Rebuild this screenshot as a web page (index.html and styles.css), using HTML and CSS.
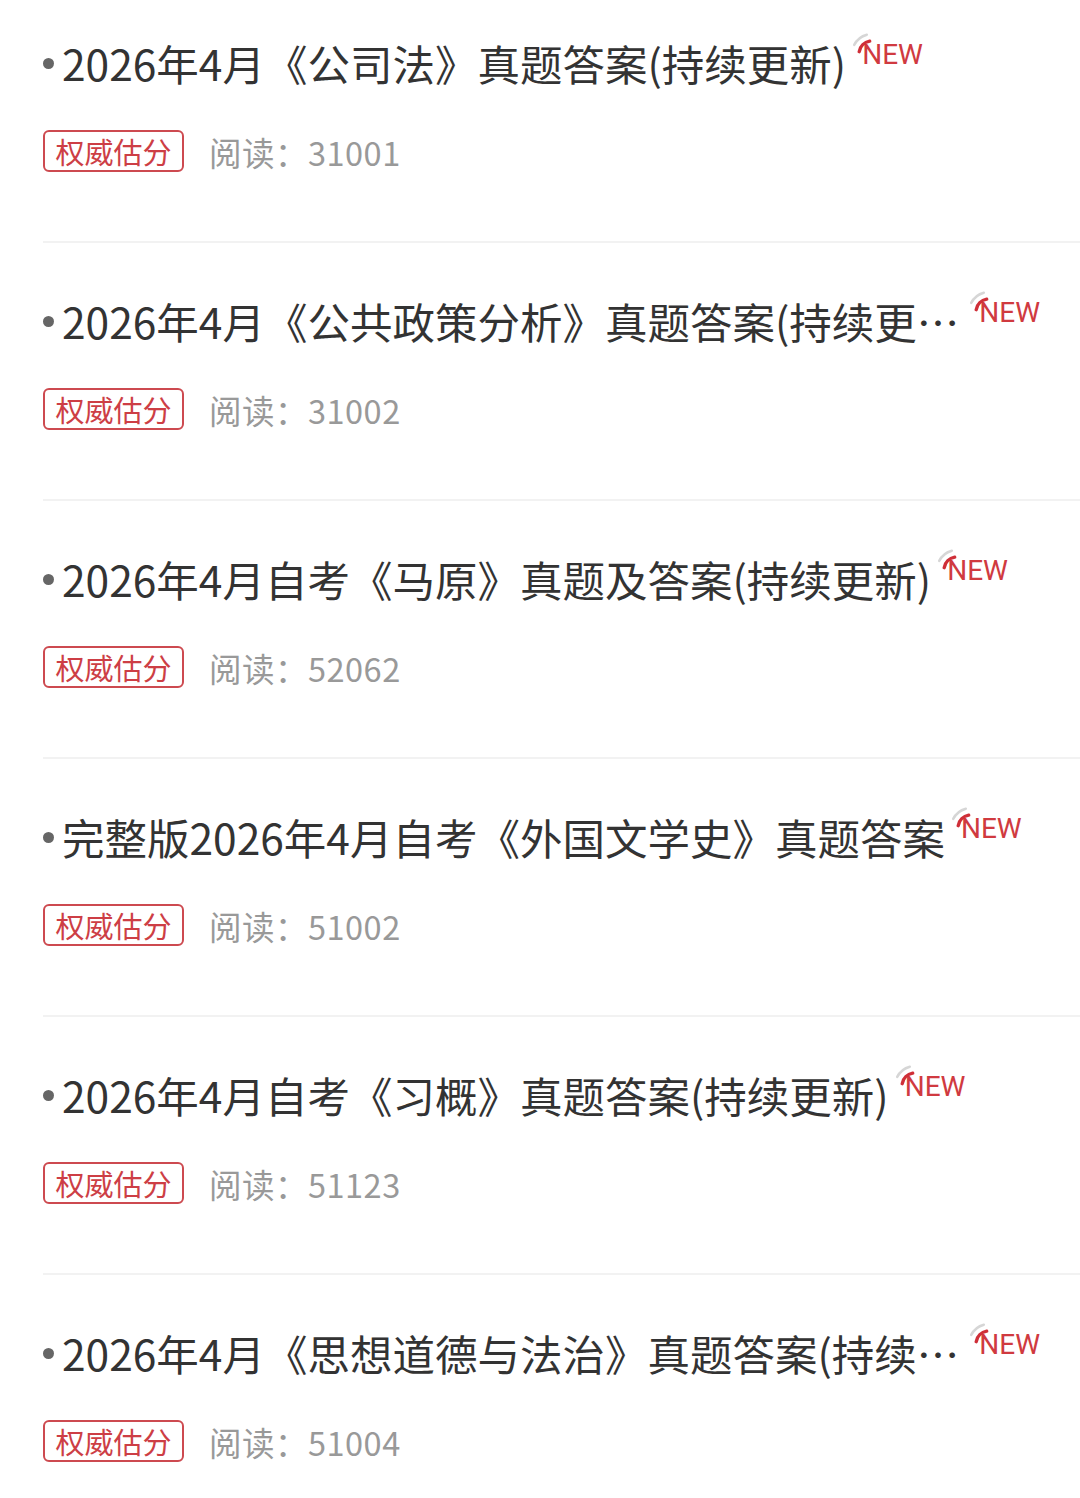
FILE: index.html
```
<!DOCTYPE html>
<html lang="zh-CN">
<head>
<meta charset="utf-8">
<title>真题答案</title>
<link rel="stylesheet" href="styles.css">
</head>
<body>
<ul class="list">
  <li class="item">
    <div class="title-row">
      <span class="dot"></span>
      <span class="title">2026年4月《公司法》真题答案(持续更新)</span>
      <span class="new"><svg class="arc" viewBox="0 0 26 26" width="26" height="26"><path d="M4.2 11.9 A20 20 0 0 1 16.8 1.7" /><path class="red" d="M9.2 18.7 A13 13 0 0 1 19.7 8.2" /></svg>NEW</span>
    </div>
    <div class="meta"><span class="tag">权威估分</span><span class="reads">阅读：31001</span></div>
  </li>
  <li class="item">
    <div class="title-row">
      <span class="dot"></span>
      <span class="title">2026年4月《公共政策分析》真题答案(持续更新)</span>
      <span class="new"><svg class="arc" viewBox="0 0 26 26" width="26" height="26"><path d="M4.2 11.9 A20 20 0 0 1 16.8 1.7" /><path class="red" d="M9.2 18.7 A13 13 0 0 1 19.7 8.2" /></svg>NEW</span>
    </div>
    <div class="meta"><span class="tag">权威估分</span><span class="reads">阅读：31002</span></div>
  </li>
  <li class="item">
    <div class="title-row">
      <span class="dot"></span>
      <span class="title">2026年4月自考《马原》真题及答案(持续更新)</span>
      <span class="new"><svg class="arc" viewBox="0 0 26 26" width="26" height="26"><path d="M4.2 11.9 A20 20 0 0 1 16.8 1.7" /><path class="red" d="M9.2 18.7 A13 13 0 0 1 19.7 8.2" /></svg>NEW</span>
    </div>
    <div class="meta"><span class="tag">权威估分</span><span class="reads">阅读：52062</span></div>
  </li>
  <li class="item">
    <div class="title-row">
      <span class="dot"></span>
      <span class="title">完整版2026年4月自考《外国文学史》真题答案</span>
      <span class="new"><svg class="arc" viewBox="0 0 26 26" width="26" height="26"><path d="M4.2 11.9 A20 20 0 0 1 16.8 1.7" /><path class="red" d="M9.2 18.7 A13 13 0 0 1 19.7 8.2" /></svg>NEW</span>
    </div>
    <div class="meta"><span class="tag">权威估分</span><span class="reads">阅读：51002</span></div>
  </li>
  <li class="item">
    <div class="title-row">
      <span class="dot"></span>
      <span class="title">2026年4月自考《习概》真题答案(持续更新)</span>
      <span class="new"><svg class="arc" viewBox="0 0 26 26" width="26" height="26"><path d="M4.2 11.9 A20 20 0 0 1 16.8 1.7" /><path class="red" d="M9.2 18.7 A13 13 0 0 1 19.7 8.2" /></svg>NEW</span>
    </div>
    <div class="meta"><span class="tag">权威估分</span><span class="reads">阅读：51123</span></div>
  </li>
  <li class="item">
    <div class="title-row">
      <span class="dot"></span>
      <span class="title">2026年4月《思想道德与法治》真题答案(持续更新)</span>
      <span class="new"><svg class="arc" viewBox="0 0 26 26" width="26" height="26"><path d="M4.2 11.9 A20 20 0 0 1 16.8 1.7" /><path class="red" d="M9.2 18.7 A13 13 0 0 1 19.7 8.2" /></svg>NEW</span>
    </div>
    <div class="meta"><span class="tag">权威估分</span><span class="reads">阅读：51004</span></div>
  </li>
</ul>
</body>
</html>
```

FILE: styles.css
```
html, body {
  margin: 0;
  padding: 0;
  background: #fff;
}
body {
  font-family: "Noto Sans CJK SC", "Noto Sans", sans-serif;
  color: #333;
}
.list {
  list-style: none;
  margin: 0;
  padding: 0;
}
.item {
  margin-left: 43px;
  padding: 48px 40px 69px 0;
  border-bottom: 2px solid #f2f2f2;
}
.item:first-child {
  padding-top: 33px;
}
.title-row {
  display: flex;
  align-items: flex-start;
  height: 60px;
}
.dot {
  flex-shrink: 0;
  width: 11px;
  height: 11px;
  border-radius: 50%;
  background: #666;
  margin-top: 25px;
  margin-right: 8px;
}
.title {
  min-width: 0;
  font-size: 42.5px;
  line-height: 60px;
  color: #333;
  white-space: nowrap;
  overflow: hidden;
  text-overflow: ellipsis;
}
.new {
  flex-shrink: 0;
  position: relative;
  margin-top: 8px;
  padding-left: 16px;
  font-family: Roboto, "Liberation Sans", sans-serif;
  font-size: 28px;
  line-height: 28px;
  color: #d03a40;
}
.arc {
  position: absolute;
  left: 4px;
  top: -8px;
  fill: none;
  stroke: #d6d6d6;
  stroke-width: 2.5;
  stroke-linecap: round;
}
.arc .red {
  stroke: #cf2f38;
  stroke-width: 3.4;
}
.meta {
  display: flex;
  align-items: center;
  margin-top: 37px;
  height: 42px;
}
.tag {
  box-sizing: border-box;
  height: 42px;
  width: 141px;
  border: 2px solid #cd4a50;
  border-radius: 6px;
  color: #cd3e45;
  font-size: 29px;
  line-height: 38px;
  text-align: center;
}
.reads {
  margin-left: 25px;
  font-size: 32.5px;
  letter-spacing: 0.5px;
  color: #999;
}
```
